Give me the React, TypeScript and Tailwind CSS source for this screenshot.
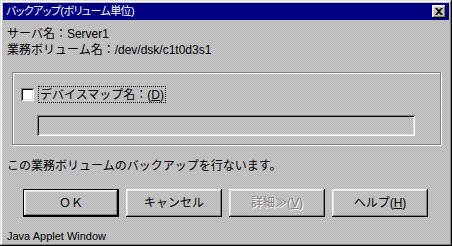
import React from 'react';

const font = "font-['Liberation_Sans','Noto_Sans_CJK_JP',sans-serif]";

// raised Win95 bevel used by the dialog buttons
const raised =
  'shadow-[inset_-1px_-1px_#000,inset_1px_1px_#fff,inset_-2px_-2px_#808080,inset_2px_2px_#dfdfdf]';

const Button: React.FC<{ children: React.ReactNode; primary?: boolean; disabled?: boolean }> = ({
  children,
  primary,
  disabled,
}) => (
  <div
    className={`w-[96px] h-[28px] flex items-center justify-center ${
      primary ? 'border border-black' : ''
    }`}
  >
    <div
      className={`w-full h-full flex items-center justify-center text-[12px] leading-none ${raised} ${
        disabled ? 'text-[#808080] [text-shadow:1px_1px_#fff]' : 'text-black'
      }`}
    >
      {children}
    </div>
  </div>
);

export default function App() {
  return (
    <div
      className={`${font} w-[452px] h-[246px] p-[3px] flex flex-col text-black bg-[repeating-conic-gradient(#c6c6c6_0_25%,#b9b9b9_0_50%)] bg-[length:2px_2px] shadow-[inset_-1px_-1px_#000,inset_1px_1px_#dfdfdf,inset_-2px_-2px_#808080,inset_2px_2px_#fff]`}
    >
      {/* title bar */}
      <div className="h-[17px] bg-[#000080] flex items-center justify-between pl-[3px] pr-[3px]">
        <span className="text-white text-[11px] tracking-[-0.6px] leading-none [font-feature-settings:'palt']">
          バックアップ(ボリューム単位)
        </span>
        <div className={`w-[14px] h-[13px] bg-[#c0c0c0] flex items-center justify-center ${raised}`}>
          <svg width="8" height="7" viewBox="0 0 8 7">
            <path d="M0 0h2l2 2 2-2h2L5 3.5 8 7H6L4 5 2 7H0l3-3.5z" fill="#000" />
          </svg>
        </div>
      </div>

      {/* server info */}
      <div className="mt-[6px] pl-[4px] text-[12px] leading-[16px]">サーバ名：Server1</div>
      <div className="pl-[4px] text-[12px] leading-[16px]">業務ボリューム名：/dev/dsk/c1t0d3s1</div>

      {/* device map group */}
      <div className="mt-[14px] ml-[9px] w-[429px] h-[73px] border border-[#808080] shadow-[inset_1px_1px_#fff,1px_1px_#fff] flex flex-col">
        <div className="mt-[13px] ml-[8px] h-[17px] flex items-center gap-[4px]">
          <div className="w-[13px] h-[13px] bg-white shadow-[inset_1px_1px_#808080,inset_-1px_-1px_#fff,inset_2px_2px_#000,inset_-2px_-2px_#dfdfdf]" />
          <div className="h-[17px] px-[1px] flex items-center border border-dotted border-black text-[12px] leading-none">
            デバイスマップ名：(<span className="underline">D</span>)
          </div>
        </div>
        <div className="mt-[12px] ml-[24px] w-[378px] h-[21px] shadow-[inset_1px_1px_#808080,inset_-1px_-1px_#fff,inset_2px_2px_#000,inset_-2px_-2px_#dfdfdf]" />
      </div>

      <div className="mt-[13px] pl-[4px] text-[12px] leading-[16px]">
        この業務ボリュームのバックアップを行ないます。
      </div>

      {/* buttons */}
      <div className="mt-[15px] ml-[20px] flex gap-[7px]">
        <Button primary>ＯＫ</Button>
        <Button>キャンセル</Button>
        <Button disabled>
          詳細≫(<span className="underline">V</span>)
        </Button>
        <Button>
          ヘルプ(<span className="underline">H</span>)
        </Button>
      </div>

      <div className="mt-[12px] pl-[4px] text-[11px] leading-[14px]">Java Applet Window</div>
    </div>
  );
}
